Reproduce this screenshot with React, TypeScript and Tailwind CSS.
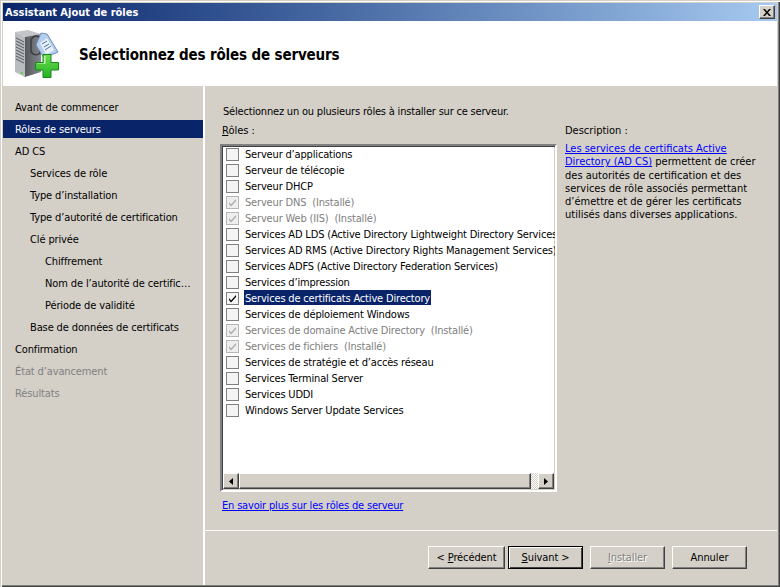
import { ReactNode } from 'react';

const steps = [
    { label: 'Avant de commencer', indent: 'pl-3' },
    { label: 'Rôles de serveurs', indent: 'pl-3', active: true },
    { label: 'AD CS', indent: 'pl-3' },
    { label: 'Services de rôle', indent: 'pl-[27px]' },
    { label: 'Type d’installation', indent: 'pl-[27px]' },
    { label: 'Type d’autorité de certification', indent: 'pl-[27px]' },
    { label: 'Clé privée', indent: 'pl-[27px]' },
    { label: 'Chiffrement', indent: 'pl-[42px]' },
    { label: 'Nom de l’autorité de certific…', indent: 'pl-[42px]' },
    { label: 'Période de validité', indent: 'pl-[42px]' },
    { label: 'Base de données de certificats', indent: 'pl-[27px]' },
    { label: 'Confirmation', indent: 'pl-3' },
    { label: 'État d’avancement', indent: 'pl-3', off: true },
    { label: 'Résultats', indent: 'pl-3', off: true },
];

const roles = [
    { name: 'Serveur d’applications' },
    { name: 'Serveur de télécopie' },
    { name: 'Serveur DHCP' },
    { name: 'Serveur DNS  (Installé)', installed: true },
    { name: 'Serveur Web (IIS)  (Installé)', installed: true },
    { name: 'Services AD LDS (Active Directory Lightweight Directory Services)' },
    { name: 'Services AD RMS (Active Directory Rights Management Services)' },
    { name: 'Services ADFS (Active Directory Federation Services)' },
    { name: 'Services d’impression' },
    { name: 'Services de certificats Active Directory', selected: true },
    { name: 'Services de déploiement Windows' },
    { name: 'Services de domaine Active Directory  (Installé)', installed: true },
    { name: 'Services de fichiers  (Installé)', installed: true },
    { name: 'Services de stratégie et d’accès réseau' },
    { name: 'Services Terminal Server' },
    { name: 'Services UDDI' },
    { name: 'Windows Server Update Services' },
];

const raised = 'border border-t-white border-l-white border-r-[#404040] border-b-[#404040] shadow-[inset_-1px_-1px_0_#808080]';

function Check({ color }: { color: string }) {
    return (
        <svg width="11" height="11" viewBox="0 0 11 11" className="block">
            <path d="M2 5 L4 7.5 L9 2 L9 4 L4 9.5 L2 7 Z" fill={color} />
        </svg>
    );
}

function RoleRow({ name, installed, selected }: { name: string; installed?: boolean; selected?: boolean }) {
    return (
        <div className="flex h-4 items-center whitespace-pre">
            <span className={`mr-[5px] ml-[3px] flex h-[13px] w-[13px] shrink-0 items-center justify-center border ${installed ? 'border-[#b5b5b5] bg-[#eeeeee]' : 'border-[#808080] bg-[#f4f4f4]'}`}>
                {installed && <Check color="#a8a8a8" />}
                {selected && <Check color="#000000" />}
            </span>
            <span className={`h-[15px] self-start px-px leading-[18px] tracking-[-0.17px] ${selected ? 'bg-[#0a246a] text-white' : installed ? 'text-[#808080]' : 'text-black'}`}>{name}</span>
        </div>
    );
}

function ScrollButton({ dir }: { dir: 'left' | 'right' }) {
    return (
        <div className={`flex h-4 w-4 shrink-0 items-center justify-center bg-[#d4d0c8] ${raised}`}>
            <svg width="5" height="7" viewBox="0 0 5 7">
                <path d={dir === 'left' ? 'M4 0 L0 3.5 L4 7 Z' : 'M0 0 L4 3.5 L0 7 Z'} fill="#000" />
            </svg>
        </div>
    );
}

function Button({ children, primary, disabled, wide }: { children: ReactNode; primary?: boolean; disabled?: boolean; wide?: boolean }) {
    return (
        <button
            className={`flex h-[23px] items-center justify-center bg-[#d4d0c8] pt-[2px] tracking-[-0.1px] ${wide ? 'w-[77px]' : 'w-[75px]'} ${primary ? 'border border-black shadow-[inset_1px_1px_0_#fff,inset_-1px_-1px_0_#404040]' : raised} ${disabled ? 'text-[#808080] [text-shadow:1px_1px_0_#fff]' : 'text-black'}`}
        >
            {children}
        </button>
    );
}

function WizardIcon() {
    return (
        <svg width="46" height="50" viewBox="0 0 46 50" className="block">
            <defs>
                <linearGradient id="side" x1="0" y1="0" x2="1" y2="0">
                    <stop offset="0" stopColor="#55585d" />
                    <stop offset="1" stopColor="#85888d" />
                </linearGradient>
                <linearGradient id="plus" x1="0" y1="0" x2="0" y2="1">
                    <stop offset="0" stopColor="#6fdc50" />
                    <stop offset="1" stopColor="#22b322" />
                </linearGradient>
            </defs>
            <path d="M1 3 L14 1 L27 5 L11 8 Z" fill="#c3c5c9" />
            <path d="M1 3 L11 8 L11 48 L1 43 Z" fill="#b9bbbf" />
            <path d="M11 8 L27 5 L27 43 L11 48 Z" fill="url(#side)" />
            <path d="M2 9 L10 13 M2 12 L10 16 M2 15 L10 19 M2 18 L10 22 M2 21 L10 25 M2 24 L10 28 M2 27 L10 31 M2 30 L10 34" stroke="#55585d" strokeWidth="1" />
            <rect x="7" y="43" width="2" height="2" fill="#5ed04a" />
            <path d="M17 11 C19 6 24 6 26 9 L26 24 C23 27 18 26 17 22 Z" fill="none" stroke="#3a3d42" strokeWidth="1.5" />
            <path d="M27 4 L33 5 L44 23 L30 29 L22 16 Z" fill="#b4cdea" stroke="#6c8dbd" strokeWidth="1" />
            <path d="M26 14 L33 9 L40 21 L32 26 Z" fill="#e6effa" />
            <path d="M28 15 L33 12 M30 18 L35 15 M31 21 L37 17" stroke="#4d72aa" strokeWidth="1" />
            <path d="M29 25.5 H37 V33.5 H44.5 V41 H37 V48.5 H29 V41 H21.5 V33.5 H29 Z" fill="url(#plus)" stroke="#17881c" strokeWidth="1" />
            <path d="M30 27 H31.5 V35 H23 V34.5 H30 Z" fill="#c4f5ae" />
        </svg>
    );
}

export default function App() {
    return (
        <div className="flex h-[587px] w-[780px] flex-col overflow-hidden bg-[#d4d0c8] pt-[3px] pr-[3px] pb-[2px] pl-[3px] font-['DejaVu_Sans',sans-serif] text-[11px] text-black [font-stretch:condensed] shadow-[inset_1px_1px_0_#d4d0c8,inset_2px_2px_0_#fff,inset_-1px_-1px_0_#404040,inset_-2px_-2px_0_#808080]">
            <div className="flex h-[18px] shrink-0 items-center justify-between bg-gradient-to-r from-[#0a246a] to-[#a6caf0] px-[2px]">
                <span className="mt-[2px] font-bold text-white">Assistant Ajout de rôles</span>
                <div className={`flex h-[14px] w-4 items-center justify-center bg-[#d4d0c8] ${raised}`}>
                    <svg width="8" height="7" viewBox="0 0 8 7">
                        <path d="M0 0 H2 L4 2.5 L6 0 H8 L5 3.5 L8 7 H6 L4 4.5 L2 7 H0 L3 3.5 Z" fill="#000" />
                    </svg>
                </div>
            </div>

            <div className="flex h-[65px] shrink-0 items-center bg-white">
                <div className="mr-[19px] ml-[11px]"><WizardIcon /></div>
                <h1 className="mt-1 text-[15px] font-bold tracking-[-0.15px]">Sélectionnez des rôles de serveurs</h1>
            </div>

            <div className="flex min-h-0 flex-1">
                <nav className="flex w-[200px] shrink-0 flex-col gap-1 pt-3 tracking-[-0.125px]">
                    {steps.map((s) => (
                        <div
                            key={s.label}
                            className={`flex h-[18px] items-center whitespace-nowrap pt-[2px] ${s.indent} ${s.active ? 'bg-[#0a246a] text-white' : s.off ? 'text-[#808080]' : ''}`}
                        >
                            {s.label}
                        </div>
                    ))}
                </nav>

                <div className="flex min-w-0 flex-1 flex-col border-l-2 border-l-white">
                    <div className="flex min-h-0 flex-1 pt-[17px] pl-[15px]">
                        <div className="flex w-[337px] shrink-0 flex-col">
                            <p className="ml-[3px] h-[19px] leading-[18px] tracking-[-0.19px]">Sélectionnez un ou plusieurs rôles à installer sur ce serveur.</p>
                            <p className="ml-[2px] h-[22px] leading-[18px]"><u>R</u>ôles :</p>
                            <div className="flex h-[348px] flex-col border-2 border-t-[#808080] border-r-white border-b-white border-l-[#808080] bg-white shadow-[inset_1px_1px_0_#404040,inset_-1px_-1px_0_#d4d0c8]">
                                <div className="min-h-0 flex-1 overflow-hidden pl-px">
                                    {roles.map((r) => (
                                        <RoleRow key={r.name} name={r.name} installed={r.installed} selected={r.selected} />
                                    ))}
                                </div>
                                <div className="mx-px mb-px flex h-4 shrink-0 bg-[#d4d0c8]">
                                    <ScrollButton dir="left" />
                                    <div className={`flex-1 bg-[#d4d0c8] ${raised}`} />
                                    <div className="w-[7px] bg-[repeating-conic-gradient(#fff_0_25%,#d4d0c8_0_50%)] bg-[length:2px_2px]" />
                                    <ScrollButton dir="right" />
                                </div>
                            </div>
                            <a className="mt-[5px] ml-[2px] leading-[18px] tracking-[-0.18px] text-[#0000ff] underline">En savoir plus sur les rôles de serveur</a>
                        </div>
                        <div className="ml-2 w-[200px]">
                            <p className="mt-[19px] h-5 leading-[18px]">Description :</p>
                            <p className="leading-[13.3px]">
                                <a className="text-[#0000ff] underline">Les services de certificats Active Directory (AD CS)</a> permettent de créer des autorités de certification et des services de rôle associés permettant d’émettre et de gérer les certificats utilisés dans diverses applications.
                            </p>
                        </div>
                    </div>
                    <div className="flex h-[55px] shrink-0 border-t border-t-white pt-[15px] pl-[223px]">
                        <Button wide><span>&lt; <u>P</u>récédent</span></Button>
                        <span className="w-[3px]" />
                        <Button primary><span><u>S</u>uivant &gt;</span></Button>
                        <span className="w-[7px]" />
                        <Button disabled><span><u>I</u>nstaller</span></Button>
                        <span className="w-[7px]" />
                        <Button>Annuler</Button>
                    </div>
                </div>
            </div>
        </div>
    );
}
